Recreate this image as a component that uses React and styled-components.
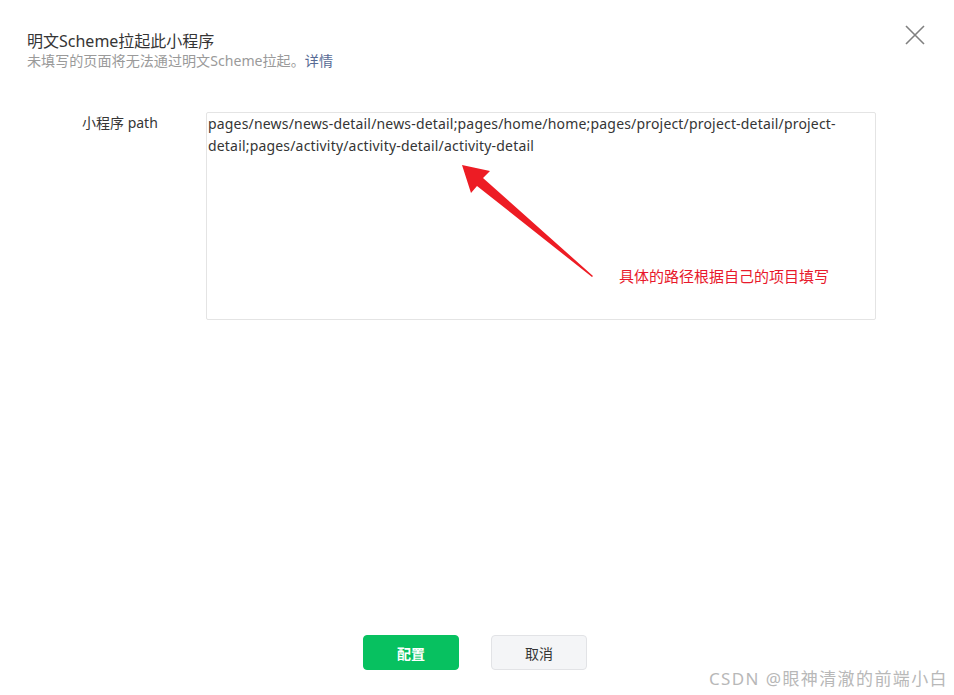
import React from 'react'
import styled, { createGlobalStyle } from 'styled-components'

const GlobalStyle = createGlobalStyle`
  html, body {
    margin: 0;
    padding: 0;
    background: #fff;
  }
  body {
    font-family: "Noto Sans", "Noto Sans CJK SC", sans-serif;
    color: #353535;
  }
`

const Dialog = styled.div`
  position: relative;
  width: 954px;
  height: 695px;
  display: flex;
  flex-direction: column;
  background: #fff;
  overflow: hidden;
`

const Header = styled.div`
  padding: 30px 27px 0;
`

const Title = styled.h3`
  margin: 0;
  font-size: 16px;
  line-height: 22px;
  font-weight: 400;
  color: #353535;
`

const SubTitle = styled.p`
  margin: -1px 0 0;
  font-size: 14.1px;
  line-height: 20px;
  color: #9a9a9a;
`

const Link = styled.a`
  color: #576b95;
  text-decoration: none;
  cursor: pointer;
`

const CloseBtn = styled.button`
  position: absolute;
  top: 24px;
  right: 28px;
  width: 22px;
  height: 22px;
  padding: 0;
  border: 0;
  background: none;
  cursor: pointer;
`

const Body = styled.div`
  flex: 1;
  padding: 41px 0 0 82px;
`

const FormRow = styled.div`
  display: flex;
  align-items: flex-start;
`

const Label = styled.label`
  width: 124px;
  flex-shrink: 0;
  font-size: 14px;
  line-height: 22px;
  color: #353535;
`

const Field = styled.div`
  position: relative;
  width: 670px;
  height: 208px;
`

const TextArea = styled.textarea`
  box-sizing: border-box;
  width: 100%;
  height: 100%;
  margin: 0;
  padding: 0 1px;
  border: 1px solid #e4e4e4;
  border-radius: 2px;
  resize: none;
  outline: none;
  overflow: hidden;
  font-family: inherit;
  font-size: 14px;
  line-height: 22px;
  letter-spacing: 0.18px;
  color: #353535;
  background: #fff;
`

const Arrow = styled.svg`
  position: absolute;
  left: 250px;
  top: 50px;
  pointer-events: none;
`

const Note = styled.span`
  position: absolute;
  left: 413px;
  top: 153px;
  font-size: 15px;
  line-height: 22px;
  color: #e8192c;
  white-space: nowrap;
`

const Footer = styled.div`
  display: flex;
  justify-content: center;
  gap: 32px;
  padding: 0 4px 25px 0;
`

const Button = styled.button`
  box-sizing: border-box;
  width: 96px;
  height: 35px;
  border-radius: 4px;
  font-family: inherit;
  font-size: 14px;
  font-weight: ${p => (p.primary ? 700 : 400)};
  cursor: pointer;
  color: ${p => (p.primary ? '#fff' : '#353535')};
  background: ${p => (p.primary ? '#07c160' : '#f4f5f7')};
  border: 1px solid ${p => (p.primary ? '#07c160' : '#e2e3e6')};
`

const Watermark = styled.div`
  position: absolute;
  right: 6px;
  bottom: 5px;
  font-size: 17px;
  line-height: 22px;
  color: #b8b8b8;
  letter-spacing: 1.4px;
`

const PATHS =
  'pages/news/news-detail/news-detail;pages/home/home;pages/project/project-detail/project-detail;pages/activity/activity-detail/activity-detail'

export default function App() {
  return (
    <Dialog>
      <GlobalStyle />
      <Header>
        <Title>明文Scheme拉起此小程序</Title>
        <SubTitle>
          未填写的页面将无法通过明文Scheme拉起。<Link>详情</Link>
        </SubTitle>
      </Header>
      <CloseBtn aria-label="关闭">
        <svg width="22" height="22" viewBox="0 0 22 22">
          <path d="M2 2 L20 20 M20 2 L2 20" stroke="#808080" strokeWidth="1.6" />
        </svg>
      </CloseBtn>

      <Body>
        <FormRow>
          <Label>小程序 path</Label>
          <Field>
            <TextArea readOnly defaultValue={PATHS} />
            <Arrow width="150" height="120" viewBox="0 0 150 120">
              <path
                d="M6 3 L34 9 L27 16 L137 114 L136 115 L21 24 L15 31 Z"
                fill="#ed1c24"
              />
            </Arrow>
            <Note>具体的路径根据自己的项目填写</Note>
          </Field>
        </FormRow>
      </Body>

      <Footer>
        <Button primary>配置</Button>
        <Button>取消</Button>
      </Footer>

      <Watermark>CSDN @眼神清澈的前端小白</Watermark>
    </Dialog>
  )
}
